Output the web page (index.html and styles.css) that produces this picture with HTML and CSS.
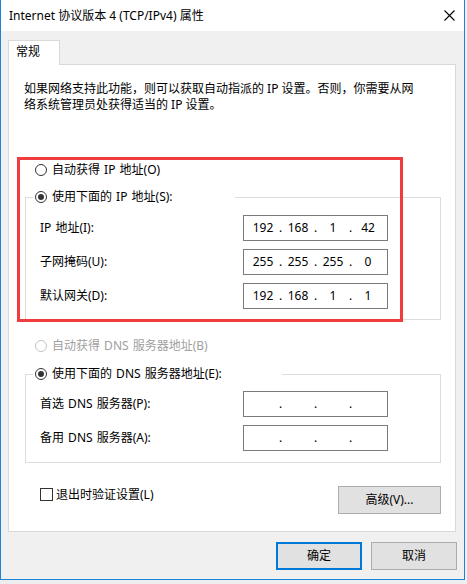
FILE: index.html
```html
<!DOCTYPE html>
<html lang="zh-CN">
<head>
<meta charset="utf-8">
<title>Internet 协议版本 4 (TCP/IPv4) 属性</title>
<link rel="stylesheet" href="styles.css">
</head>
<body>
<div class="window">
  <div class="titlebar">
    <span class="title">Internet 协议版本 4 (TCP/IPv4) 属性</span>
    <svg class="close" width="11" height="11" viewBox="0 0 11 11"><path d="M0.5 0.5 L10.5 10.5 M10.5 0.5 L0.5 10.5" stroke="#000" stroke-width="1.1" fill="none"/></svg>
  </div>
  <div class="body">
    <div class="tabs"><div class="tab">常规</div></div>
    <div class="panel">
      <p class="intro">如果网络支持此功能，则可以获取自动指派的 IP 设置。否则，你需要从网<br>络系统管理员处获得适当的 IP 设置。</p>

      <div class="radio-row row-auto-ip"><span class="radio"></span><span>自动获得 IP 地址(O)</span></div>

      <div class="group group-ip">
        <div class="legend legend-ip"><span class="radio checked"></span><span>使用下面的 IP 地址(S):</span></div>
        <div class="field first"><span class="label">IP 地址(I):</span>
          <div class="ipbox"><span class="seg">192</span><span class="dot">.</span><span class="seg">168</span><span class="dot">.</span><span class="seg">1</span><span class="dot">.</span><span class="seg">42</span></div>
        </div>
        <div class="field"><span class="label">子网掩码(U):</span>
          <div class="ipbox"><span class="seg">255</span><span class="dot">.</span><span class="seg">255</span><span class="dot">.</span><span class="seg">255</span><span class="dot">.</span><span class="seg">0</span></div>
        </div>
        <div class="field"><span class="label">默认网关(D):</span>
          <div class="ipbox"><span class="seg">192</span><span class="dot">.</span><span class="seg">168</span><span class="dot">.</span><span class="seg">1</span><span class="dot">.</span><span class="seg">1</span></div>
        </div>
      </div>

      <div class="radio-row row-auto-dns disabled"><span class="radio"></span><span>自动获得 DNS 服务器地址(B)</span></div>

      <div class="group group-dns">
        <div class="legend legend-dns"><span class="radio checked"></span><span>使用下面的 DNS 服务器地址(E):</span></div>
        <div class="field first"><span class="label">首选 DNS 服务器(P):</span>
          <div class="ipbox"><span class="seg"></span><span class="dot">.</span><span class="seg"></span><span class="dot">.</span><span class="seg"></span><span class="dot">.</span><span class="seg"></span></div>
        </div>
        <div class="field"><span class="label">备用 DNS 服务器(A):</span>
          <div class="ipbox"><span class="seg"></span><span class="dot">.</span><span class="seg"></span><span class="dot">.</span><span class="seg"></span><span class="dot">.</span><span class="seg"></span></div>
        </div>
      </div>

      <div class="foot">
        <label class="check"><span class="box"></span><span>退出时验证设置(L)</span></label>
        <button class="btn btn-adv">高级(V)...</button>
      </div>

      <div class="annot"></div>
    </div>
    <div class="actions">
      <button class="btn btn-action btn-primary">确定</button>
      <button class="btn btn-action">取消</button>
    </div>
  </div>
</div>
</body>
</html>
```

FILE: styles.css
```css
* { box-sizing: border-box; }

html, body {
  margin: 0;
  padding: 0;
}

body {
  background: #eeeeee;
  font-family: "Noto Sans", "Noto Sans CJK SC", sans-serif;
  font-size: 12px;
  color: #000;
  line-height: 16px;
  word-spacing: 1px;
}

.window {
  width: 465px;
  height: 580px;
  border: 1px solid #1883d7;
  border-top: 0;
  background: #f0f0f0;
  display: flex;
  flex-direction: column;
}

.titlebar {
  height: 31px;
  flex: none;
  background: #fff;
  display: flex;
  align-items: center;
  justify-content: space-between;
  padding: 0 9px 0 8px;
}

.title {
  font-size: 12px;
  line-height: 16px;
  word-spacing: 0;
}

.close {
  display: block;
}

.body {
  flex: 1;
  padding: 9px 8px 0 7px;
  display: flex;
  flex-direction: column;
}

.tabs {
  display: flex;
  height: 24px;
  position: relative;
  z-index: 1;
}

.tab {
  width: 52px;
  height: 25px;
  background: #fff;
  border: 1px solid #d9d9d9;
  border-bottom: 0;
  padding-left: 7px;
  line-height: 22px;
}

.panel {
  position: relative;
  height: 468px;
  background: #fff;
  border: 1px solid #d9d9d9;
}

.intro {
  margin: 0;
  padding: 16px 0 0 15px;
  line-height: 16px;
  white-space: nowrap;
  word-spacing: 0;
}

.radio-row {
  display: flex;
  align-items: center;
  height: 20px;
  padding-left: 26px;
}

.row-auto-ip { margin-top: 47px; }
.row-auto-dns { margin-top: 16px; }

.radio {
  width: 12px;
  height: 12px;
  border: 1px solid #333;
  border-radius: 50%;
  margin-right: 5px;
  flex: none;
  display: flex;
  align-items: center;
  justify-content: center;
  background: #fff;
}

.radio.checked::after {
  content: "";
  width: 6px;
  height: 6px;
  border-radius: 50%;
  background: #333;
}

.disabled { color: #a0a0a0; }
.disabled .radio { border-color: #c4c4c4; }

.group {
  border: 1px solid #dcdcdc;
  margin: 0 14px 0 16px;
  padding: 0 0 10px 14px;
}

.group-ip { margin-top: 17px; }
.group-dns { margin-top: 18px; padding-bottom: 11px; }

.legend {
  display: flex;
  align-items: center;
  height: 20px;
  margin: -11px 0 0 -7px;
  padding-left: 2px;
  background: #fff;
}

.legend-ip { width: 202px; }
.legend-dns { width: 249px; }

.field {
  display: flex;
  align-items: center;
  height: 26px;
  margin-top: 8px;
}

.group-dns .field.first { margin-top: 7px; }

.label {
  width: 203px;
  flex: none;
}

.ipbox {
  width: 145px;
  height: 26px;
  border: 1px solid #7a7a7a;
  display: flex;
  align-items: center;
  padding-left: 5px;
  background: #fff;
}

.seg {
  width: 28px;
  text-align: center;
}

.dot {
  width: 7px;
  text-align: center;
}

.foot {
  display: flex;
  justify-content: space-between;
  align-items: flex-start;
  margin-top: 23px;
  padding: 0 14px 0 31px;
}

.check {
  display: flex;
  align-items: center;
  line-height: 17px;
}

.box {
  width: 13px;
  height: 13px;
  border: 1px solid #333;
  margin-right: 3px;
  background: #fff;
}

.btn {
  font-family: inherit;
  font-size: 12px;
  color: #000;
  background: #e1e1e1;
  border: 1px solid #adadad;
  height: 28px;
  padding: 0;
  line-height: 16px;
}

.btn-adv { width: 103px; }

.actions {
  display: flex;
  justify-content: flex-end;
  gap: 9px;
  margin: 10px -1px 0 0;
}

.btn-action { width: 86px; }

.btn-primary {
  border: 2px solid #0078d7;
}

.annot {
  position: absolute;
  left: 8px;
  top: 92px;
  width: 386px;
  height: 165px;
  border: 3px solid #f03c3c;
  pointer-events: none;
}
```
